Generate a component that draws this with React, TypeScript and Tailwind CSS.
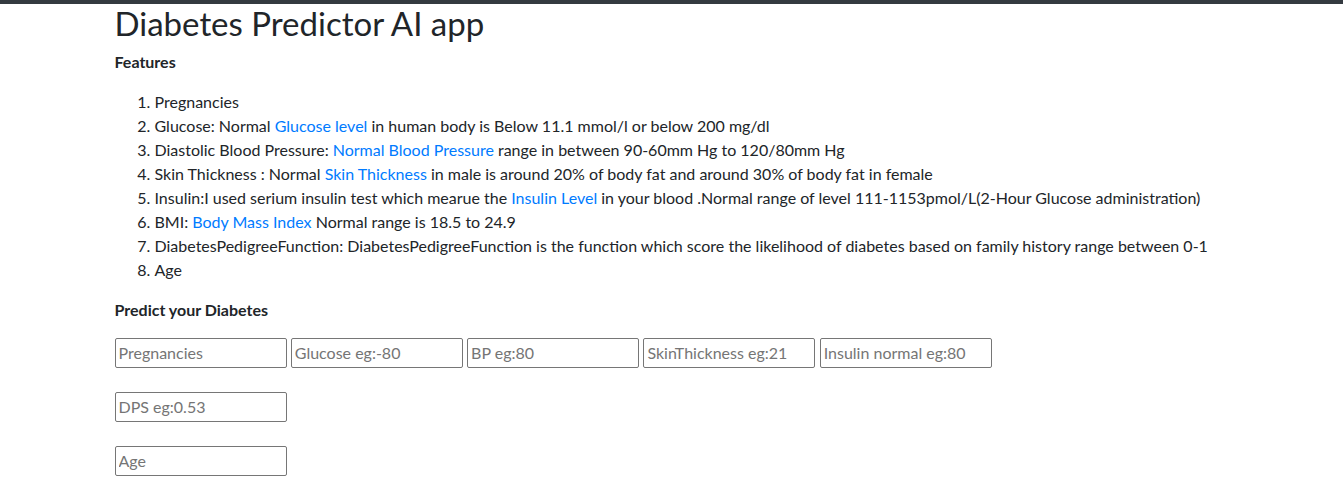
import React from 'react';

const Link = ({ children }: { children: React.ReactNode }) => (
  <a href="#" className="text-[#007bff] no-underline">{children}</a>
);

const inputCls =
  "w-[172px] h-[30px] px-[3px] border border-[#767676] rounded-[2px] bg-white text-[16px] text-[#212529] placeholder:text-[#757575] outline-none";

export default function App() {
  return (
    <div className="min-h-screen bg-white text-[#212529] font-['Lato',sans-serif] text-[16px] leading-6">
      <div className="h-[4px] bg-[#343a40]" />
      <div className="w-[1140px] mx-auto px-[13px]">
        <h1 className="text-[33px] leading-[1.2] font-normal">Diabetes Predictor AI app</h1>
        <h6 className="mt-[6px] font-bold text-[16px] leading-6">Features</h6>

        <ol className="list-decimal pl-10 mt-4">
          <li>Pregnancies</li>
          <li>Glucose: Normal <Link>Glucose level</Link> in human body is Below 11.1 mmol/l or below 200 mg/dl</li>
          <li>Diastolic Blood Pressure: <Link>Normal Blood Pressure</Link> range in between 90-60mm Hg to 120/80mm Hg</li>
          <li>Skin Thickness : Normal <Link>Skin Thickness</Link> in male is around 20% of body fat and around 30% of body fat in female</li>
          <li>Insulin:I used serium insulin test which mearue the <Link>Insulin Level</Link> in your blood .Normal range of level 111-1153pmol/L(2-Hour Glucose administration)</li>
          <li>BMI: <Link>Body Mass Index</Link> Normal range is 18.5 to 24.9</li>
          <li>DiabetesPedigreeFunction: DiabetesPedigreeFunction is the function which score the likelihood of diabetes based on family history range between 0-1</li>
          <li>Age</li>
        </ol>

        <h6 className="mt-4 font-bold text-[16px] leading-6">Predict your Diabetes</h6>

        <form className="mt-4 flex flex-col gap-6">
          <div className="flex gap-[4.3px]">
            <input className={inputCls} placeholder="Pregnancies" />
            <input className={inputCls} placeholder="Glucose eg:-80" />
            <input className={inputCls} placeholder="BP eg:80" />
            <input className={inputCls} placeholder="SkinThickness eg:21" />
            <input className={inputCls} placeholder="Insulin normal eg:80" />
          </div>
          <div className="flex">
            <input className={inputCls} placeholder="DPS eg:0.53" />
          </div>
          <div className="flex">
            <input className={inputCls} placeholder="Age" />
          </div>
        </form>
      </div>
    </div>
  );
}
